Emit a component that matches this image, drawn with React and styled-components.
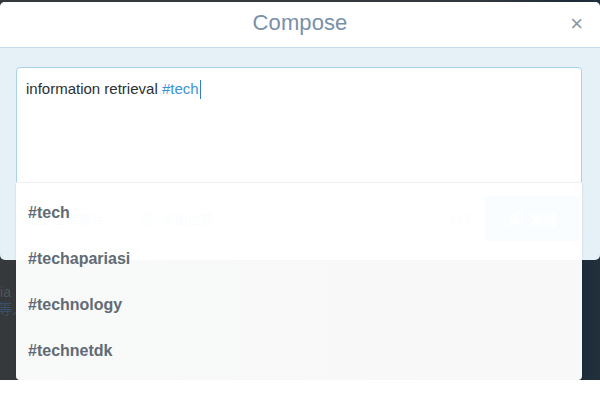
import React from 'react';
import styled, { createGlobalStyle } from 'styled-components';
import { Camera, MapPin, Feather } from 'lucide-react';

const GlobalStyle = createGlobalStyle`
  html, body {
    margin: 0;
    padding: 0;
    background: #ffffff;
  }
  body {
    font-family: "Liberation Sans", Arial, "Noto Sans CJK SC", sans-serif;
  }
`;

const suggestions = ['#tech', '#techapariasi', '#technology', '#technetdk'];

function App() {
    return (
        <>
            <GlobalStyle />
            <Stage>
                <Modal>
                    <Header>
                        <Title>Compose</Title>
                        <Close>×</Close>
                    </Header>
                    <Body>
                        <TweetBox>
                            <Editor>
                                information retrieval <Tag>#tech</Tag><Caret />
                            </Editor>
                            <Toolbar>
                                <ToolLink>
                                    <Camera size={16} strokeWidth={2} />
                                    上传照片
                                </ToolLink>
                                <ToolLink>
                                    <MapPin size={16} strokeWidth={2} />
                                    添加位置
                                </ToolLink>
                                <Spacer />
                                <Counter>113</Counter>
                                <TweetButton>
                                    <Feather size={16} strokeWidth={2.4} />
                                    发推
                                </TweetButton>
                            </Toolbar>
                        </TweetBox>
                    </Body>
                </Modal>
                <BackdropText>
                    <span>Olivia</span>
                    <Meta>等人</Meta>
                </BackdropText>
                <Dropdown>
                    {suggestions.map((s) => (
                        <Item key={s}>{s}</Item>
                    ))}
                </Dropdown>
            </Stage>
        </>
    );
}

const Stage = styled.div`
    position: relative;
    height: 380px;
    padding-top: 2px;
    box-sizing: border-box;
    background: linear-gradient(90deg, #36393c 0%, #33383c 80%, #1c2b3a 96%, #22303c 100%);
    overflow: hidden;
`;

const Modal = styled.div`
    height: 258px;
    background: #e6f0f7;
    border-radius: 5px;
    overflow: hidden;
    display: flex;
    flex-direction: column;
`;

const Header = styled.header`
    height: 45px;
    flex: none;
    background: #ffffff;
    border-bottom: 1px solid #c6dde9;
    display: flex;
    align-items: center;
    justify-content: center;
    position: relative;
`;

const Title = styled.h1`
    margin: -4px 0 0;
    font-size: 22px;
    font-weight: normal;
    color: #7890a8;
    letter-spacing: 0.1px;
`;

const Close = styled.span`
    position: absolute;
    right: 17px;
    top: 10px;
    font-size: 22px;
    line-height: 24px;
    color: #8a98a4;
`;

const Body = styled.div`
    padding: 19px 18px 0 16px;
`;

const TweetBox = styled.div`
    height: 183px;
    box-sizing: border-box;
    background: #ffffff;
    border: 1px solid #a9d2e9;
    border-radius: 4px;
    display: flex;
    flex-direction: column;
`;

const Editor = styled.div`
    height: 114px;
    box-sizing: border-box;
    padding: 11px 9px;
    font-size: 15px;
    line-height: 20px;
    color: #292f33;
`;

const Tag = styled.span`
    color: #3b94d9;
`;

const Caret = styled.span`
    display: inline-block;
    width: 1px;
    height: 19px;
    margin-left: 1px;
    vertical-align: -5px;
    background: #2f7fc4;
`;

const Toolbar = styled.div`
    display: flex;
    align-items: center;
    gap: 34px;
    padding: 14px 2px 0 14px;
`;

const ToolLink = styled.span`
    display: flex;
    align-items: center;
    gap: 6px;
    font-size: 13px;
    color: #3b94d9;
`;

const Spacer = styled.div`
    flex: 1;
`;

const Counter = styled.span`
    font-size: 14px;
    color: #8899a6;
    margin-right: -20px;
`;

const TweetButton = styled.button`
    width: 94px;
    height: 45px;
    border: none;
    border-radius: 4px;
    background: #55acee;
    color: #ffffff;
    font-family: inherit;
    font-size: 14px;
    font-weight: bold;
    display: flex;
    align-items: center;
    justify-content: center;
    gap: 6px;
`;

const BackdropText = styled.div`
    margin: 24px 0 0 -24px;
    display: flex;
    flex-direction: column;
    font-size: 14px;
    line-height: 17px;
    color: #4d565d;
`;

const Meta = styled.span`
    color: #3a5068;
    margin-left: 22px;
`;

const Dropdown = styled.ul`
    position: absolute;
    top: 182px;
    left: 16px;
    width: 566px;
    height: 198px;
    box-sizing: border-box;
    margin: 0;
    padding: 7px 0 6px;
    list-style: none;
    background: rgba(255, 255, 255, 0.97);
    border-top: 1px solid #eef1f3;
    border-radius: 0 0 4px 4px;
    box-shadow: 0 1px 2px rgba(0, 0, 0, 0.15);
`;

const Item = styled.li`
    height: 46px;
    display: flex;
    align-items: center;
    padding-left: 12px;
    font-size: 16px;
    font-weight: bold;
    color: #5f6b75;
`;

export default App;
